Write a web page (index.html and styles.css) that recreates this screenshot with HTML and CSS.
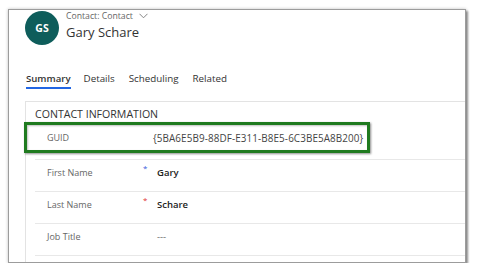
FILE: index.html
```html
<!DOCTYPE html>
<html lang="en">

<head>
    <meta charset="UTF-8">
    <meta name="viewport" content="width=device-width, initial-scale=1.0">
    <title>Contact</title>
    <link rel="stylesheet" href="styles.css">
</head>

<body>
    <div class="frame">
        <div class="header">
            <div class="avatar">GS</div>
            <div class="title">
                <div class="entity">Contact: Contact
                    <svg class="chev" width="9" height="6" viewBox="0 0 9 6">
                        <polyline points="0.5,0.8 4.5,4.8 8.5,0.8" fill="none" stroke="#777" stroke-width="0.9" />
                    </svg>
                </div>
                <div class="name">Gary Schare</div>
            </div>
        </div>
        <div class="tabs">
            <div class="tab active">Summary</div>
            <div class="tab">Details</div>
            <div class="tab">Scheduling</div>
            <div class="tab">Related</div>
        </div>
        <div class="panel">
            <div class="section">CONTACT INFORMATION</div>
            <div class="guid-wrap">
                <div class="guid">
                    <span class="label">GUID</span>
                    <span class="guid-value">{5BA6E5B9-88DF-E311-B8E5-6C3BE5A8B200}</span>
                </div>
            </div>
            <div class="field">
                <span class="label">First Name</span>
                <span class="req blue">*</span>
                <span class="value">Gary</span>
            </div>
            <div class="field">
                <span class="label">Last Name</span>
                <span class="req red">*</span>
                <span class="value">Schare</span>
            </div>
            <div class="field">
                <span class="label">Job Title</span>
                <span class="req"></span>
                <span class="value empty">---</span>
            </div>
        </div>
    </div>
</body>

</html>
```

FILE: styles.css
```css
html,
body {
    margin: 0;
    padding: 0;
    background-color: #fff;
}

body {
    font-family: "Open Sans", "Noto Sans", sans-serif;
    color: #333;
}

.frame {
    margin: 9px 0 0 8px;
    width: 458px;
    height: 254px;
    box-sizing: border-box;
    border: 1px solid #9c9c9c;
    background-color: #fff;
    box-shadow: 2px 2px 2px rgba(0, 0, 0, .4), 0 0 3px rgba(0, 0, 0, .25);
    overflow: hidden;
}

.header {
    display: flex;
    align-items: center;
    gap: 7px;
    height: 35px;
    padding: 0 0 0 16px;
}

.avatar {
    width: 34px;
    height: 34px;
    border-radius: 50%;
    background-color: #0e5d5b;
    color: #fff;
    font-size: 10.5px;
    font-weight: bold;
    display: flex;
    align-items: center;
    justify-content: center;
}

.title {
    display: flex;
    flex-direction: column;
    margin-top: -4px;
}

.entity {
    font-size: 8.7px;
    color: #666;
    line-height: 13px;
    display: flex;
    align-items: center;
    gap: 6px;
}

.name {
    font-size: 13px;
    color: #333;
    line-height: 19px;
}

.tabs {
    display: flex;
    gap: 14px;
    margin-top: 25px;
    padding-left: 17px;
    height: 21px;
}

.tab {
    font-size: 9.8px;
    line-height: 18px;
    color: #333;
}

.tab.active {
    font-weight: 600;
    font-size: 9.6px;
    border-bottom: 2px solid #2266e3;
    height: 17px;
    margin-right: -1px;
}

.panel {
    margin-left: 16px;
    margin-top: 10px;
    border-left: 1px solid #e3e3e3;
    border-top: 1px solid #e3e3e3;
    height: 200px;
}

.section {
    font-size: 10.6px;
    color: #333;
    line-height: 14px;
    padding: 5px 0 0 9px;
    height: 15px;
}

.guid-wrap {
    margin-left: 9px;
    padding-bottom: 6px;
    border-bottom: 1px solid #e8e8e8;
}

.guid {
    margin-left: -11px;
    width: 346px;
    height: 31px;
    box-sizing: border-box;
    border: 3px solid #1f7a1f;
    box-shadow: 1px 1px 2px rgba(0, 0, 0, .45), inset 1px 1px 2px rgba(0, 0, 0, .25);
    display: flex;
    align-items: center;
    padding-left: 20px;
}

.guid .label {
    width: 106px;
}

.guid-value {
    font-size: 9.9px;
    color: #444;
    letter-spacing: 0.1px;
}

.label {
    font-size: 9px;
    color: #666;
}

.field {
    margin-left: 9px;
    height: 31px;
    border-bottom: 1px solid #e8e8e8;
    display: flex;
    align-items: flex-start;
    padding-left: 12px;
    line-height: 14px;
}

.field > span {
    margin-top: 6px;
}

.field .label {
    width: 96px;
}

.field > .req {
    width: 14px;
    font-size: 8px;
    line-height: 8px;
    margin-top: 4px;
}

.blue {
    color: #3b5bdb;
}

.red {
    color: #e03131;
}

.value {
    font-size: 9.5px;
    font-weight: 600;
    color: #222;
}

.value.empty {
    font-weight: normal;
    color: #666;
}
```
